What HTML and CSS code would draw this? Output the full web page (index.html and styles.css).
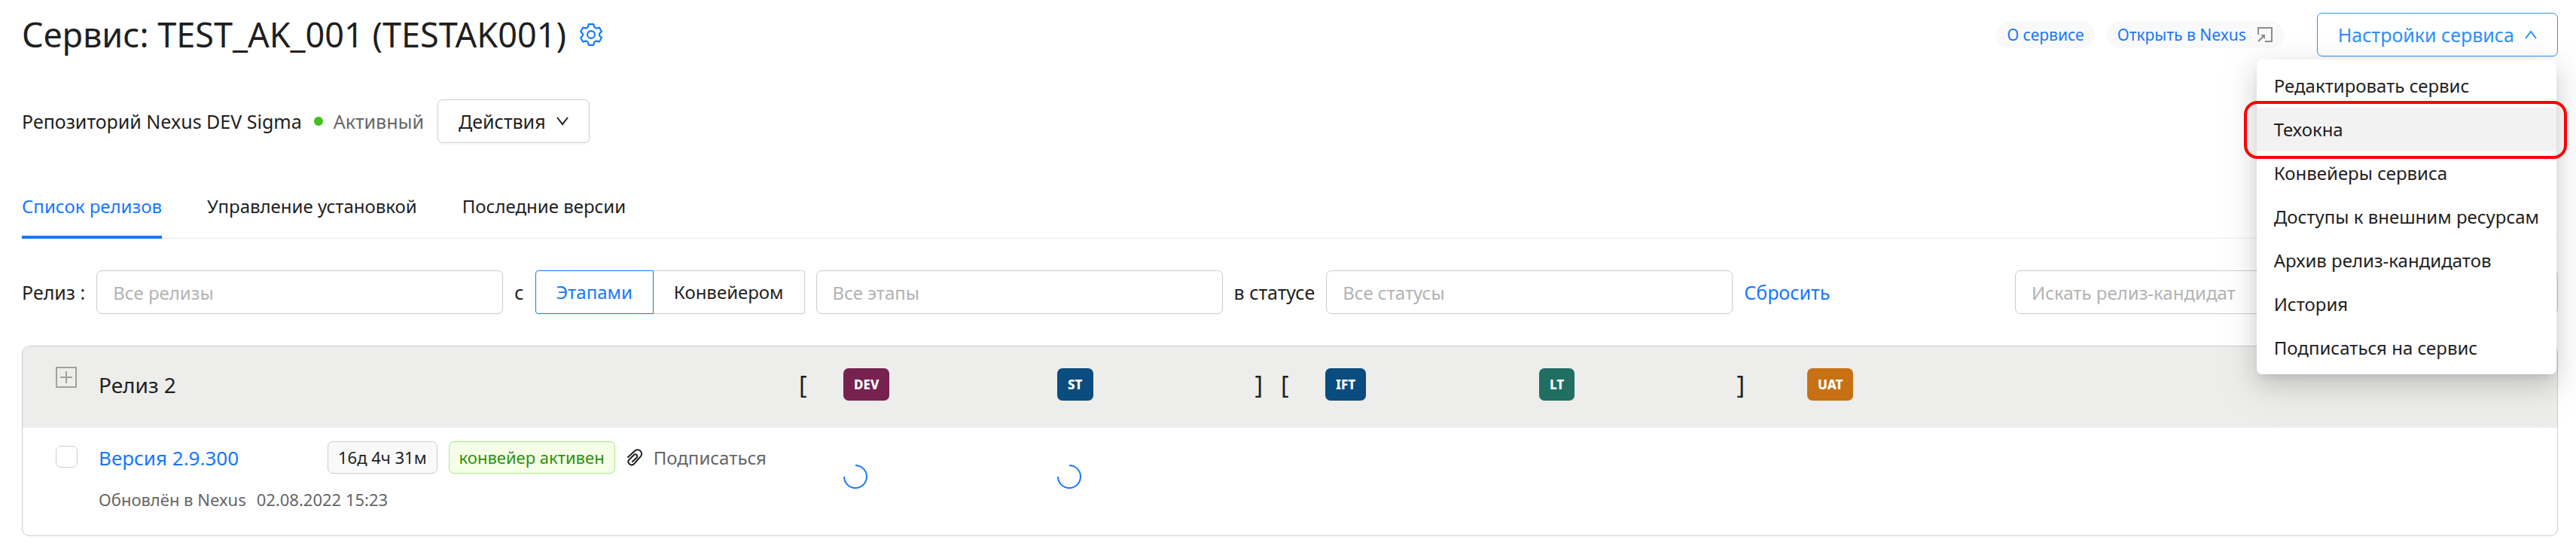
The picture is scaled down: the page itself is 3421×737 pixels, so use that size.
FILE: index.html
```html
<!DOCTYPE html>
<html lang="ru">
<head>
  <meta charset="UTF-8" />
  <meta name="viewport" content="width=device-width, initial-scale=1.0" />
  <title>Сервис: TEST_AK_001 (TESTAK001)</title>
  <link rel="stylesheet" href="styles.css">
</head>
<body>
  <header class="page-header">
    <h1>Сервис: TEST_AK_001 (TESTAK001)</h1>
    <button class="icon-button" aria-label="Настроить">
      <svg class="gear" viewBox="0 0 28 28" fill="none" stroke="currentColor" stroke-width="2" stroke-linejoin="round">
        <path d="M11 1h6l.9 3.700q1.400.500 2.600 1.500l3.600-1 2.900 5-2.700 2.600v2.400l2.700 2.600-2.900 5-3.600-1q-1.200 1-2.600 1.500l-.9 3.700h-6l-.9-3.700q-1.400-.500-2.600-1.500l-3.600 1-2.900-5 2.700-2.600v-2.400l-2.700-2.600 2.900-5 3.600 1q1.200-1 2.600-1.500z" />
        <circle cx="14" cy="14" r="4.600" />
      </svg>
    </button>
    <div class="header-actions">
      <a href="#about" class="pill">О сервисе</a>
      <a href="#nexus" class="pill">Открыть в Nexus
        <svg class="open-icon" viewBox="0 0 22 22" fill="none" stroke="#8c8c8c" stroke-width="2">
          <path d="M2 11V2h18v18h-9M2 20l7-7" />
          <path d="M11 11v6l-6-6z" fill="#8c8c8c" stroke="none" />
        </svg>
      </a>
      <div class="dropdown">
        <button class="btn btn-active">Настройки сервиса
          <svg class="chevron" viewBox="0 0 16 16" fill="none" stroke="currentColor" stroke-width="2"><path d="M1 13L8 4l7 9" /></svg>
        </button>
        <ul class="menu">
          <li><a href="#edit">Редактировать сервис</a></li>
          <li class="marked"><a href="#windows">Техокна</a></li>
          <li><a href="#pipelines">Конвейеры сервиса</a></li>
          <li><a href="#access">Доступы к внешним ресурсам</a></li>
          <li><a href="#archive">Архив релиз-кандидатов</a></li>
          <li><a href="#history">История</a></li>
          <li><a href="#subscribe">Подписаться на сервис</a></li>
        </ul>
      </div>
    </div>
  </header>

  <div class="repo">
    <span>Репозиторий Nexus DEV Sigma</span>
    <span class="status">Активный</span>
    <button class="btn">Действия
      <svg class="chevron" viewBox="0 0 16 16" fill="none" stroke="currentColor" stroke-width="2"><path d="M1 3l7 9 7-9" /></svg>
    </button>
  </div>

  <nav class="tabs">
    <a href="#releases" class="active">Список релизов</a>
    <a href="#install">Управление установкой</a>
    <a href="#latest">Последние версии</a>
  </nav>

  <form class="filters">
    <label for="release">Релиз :</label>
    <input type="text" id="release" placeholder="Все релизы">
    <span>с</span>
    <div class="toggle">
      <button type="button" class="selected">Этапами</button>
      <button type="button">Конвейером</button>
    </div>
    <input type="text" aria-label="Этапы" placeholder="Все этапы">
    <label for="state">в статусе</label>
    <input type="text" id="state" placeholder="Все статусы">
    <button type="reset" class="link">Сбросить</button>
    <input type="search" class="search" aria-label="Поиск" placeholder="Искать релиз-кандидат">
  </form>

  <table class="releases">
    <colgroup>
      <col class="col-check"><col class="col-name"><col class="col-bracket">
      <col class="col-stage"><col class="col-last"><col class="col-bracket">
      <col class="col-stage"><col class="col-last"><col class="col-bracket">
      <col>
    </colgroup>
    <thead>
      <tr>
        <th>
          <button class="expand" aria-label="Развернуть">
            <svg viewBox="0 0 28 28" fill="none" stroke="#a0a0a0" stroke-width="2"><path d="M1 1h26v26H1zM6 14h16M14 6v16" /></svg>
          </button>
        </th>
        <th>Релиз 2</th>
        <th class="bracket">[</th>
        <th><span class="stage dev">DEV</span></th>
        <th><div class="cell"><span class="stage st">ST</span><span class="bracket">]</span></div></th>
        <th class="bracket">[</th>
        <th><span class="stage st">IFT</span></th>
        <th><div class="cell"><span class="stage lt">LT</span><span class="bracket">]</span></div></th>
        <th></th>
        <th><span class="stage uat">UAT</span></th>
      </tr>
    </thead>
    <tbody>
      <tr>
        <td><input type="checkbox" aria-label="Версия 2.9.300"></td>
        <td>
          <div class="version">
            <a href="#version">Версия 2.9.300</a>
            <span class="tag">16д 4ч 31м</span>
            <span class="tag green">конвейер активен</span>
            <svg class="clip" viewBox="0 0 22 24" fill="none" stroke="#1f1f1f" stroke-width="2" stroke-linecap="round">
              <path d="M2 11L10.500 3.200a5.200 5.200 0 0 1 8.300 7L10 20a4.400 4.400 0 0 1-7-5.200L9.800 8.200a2.600 2.600 0 0 1 3.800 3.600L7.800 17" />
            </svg>
            <button class="subscribe">Подписаться</button>
          </div>
          <div class="updated"><span>Обновлён в Nexus</span><time>02.08.2022 15:23</time></div>
        </td>
        <td></td>
        <td><svg class="spinner" viewBox="0 0 32 32"><path d="M16 1a15 15 0 1 1-15 15" /></svg></td>
        <td><svg class="spinner" viewBox="0 0 32 32"><path d="M16 1a15 15 0 1 1-15 15" /></svg></td>
        <td></td>
        <td></td>
        <td></td>
        <td></td>
        <td></td>
      </tr>
    </tbody>
  </table>
</body>
</html>
```
FILE: styles.css
```css
* {
  box-sizing: border-box;
}

body {
  margin: 0;
  padding: 16px 24px 24px 29px;
  background: #fff;
  color: #1f1f1f;
  font-family: 'Noto Sans', sans-serif;
  font-size: 25px;
  line-height: 36px;
}

a {
  color: #1677ff;
  text-decoration: none;
}

button,
input {
  font: inherit;
  color: inherit;
}

button {
  padding: 0;
  border: 0;
  background: none;
  cursor: pointer;
}

svg {
  display: block;
  flex: none;
}

.page-header {
  display: flex;
  align-items: center;
  height: 60px;
}

h1 {
  margin: 0;
  font-size: 45px;
  font-weight: 400;
  line-height: 60px;
}

.icon-button {
  margin-left: 18px;
  color: #1677ff;
}

.gear {
  width: 30px;
  height: 30px;
}

.header-actions {
  display: flex;
  align-items: center;
  gap: 16px;
  margin-left: auto;
}

.pill {
  display: flex;
  align-items: center;
  gap: 14px;
  padding: 0 14px;
  border-radius: 18px;
  background: #f9f9f9;
  font-size: 21px;
}

.open-icon {
  width: 22px;
  height: 22px;
}

.dropdown {
  position: relative;
  margin-left: 28px;
}

.btn {
  display: flex;
  align-items: center;
  gap: 14px;
  height: 58px;
  padding: 0 27px;
  border: 1px solid #ccc;
  border-radius: 7px;
  background: #fff;
  box-shadow: 0 3px 0 #f9f9f9;
}

.btn-active {
  border-color: #2e90fa;
  color: #2e90fa;
}

.chevron {
  width: 16px;
  height: 16px;
}

.menu {
  position: absolute;
  z-index: 2;
  top: 62px;
  right: 2px;
  margin: 0;
  padding: 6px 0;
  border-radius: 7px;
  background: #fff;
  box-shadow: 0 12px 32px rgba(0, 0, 0, 0.16), 0 6px 12px -6px rgba(0, 0, 0, 0.12), 0 18px 60px 16px rgba(0, 0, 0, 0.04);
  font-size: 24px;
  line-height: 35px;
  list-style: none;
  white-space: nowrap;
}

.menu a {
  display: block;
  padding: 11px 23px 12px;
  color: #1f1f1f;
}

.marked {
  position: relative;
}

.marked a {
  background: #f2f2f2;
}

/* red highlight around the item */
.marked::after {
  content: '';
  position: absolute;
  inset: -9px -14px -10px -17px;
  border: 4px solid #f00;
  border-radius: 18px;
  pointer-events: none;
}

.repo {
  display: flex;
  align-items: center;
  margin-top: 56px;
}

.status {
  display: flex;
  align-items: center;
  gap: 14px;
  margin: 0 18px 0 16px;
  color: #666;
}

.status::before {
  content: '';
  width: 12px;
  height: 12px;
  border-radius: 50%;
  background: #43c11c;
}

.tabs {
  display: flex;
  gap: 60px;
  margin-top: 46px;
  border-bottom: 1px solid #ececec;
  font-size: 24px;
}

.tabs a {
  padding: 20px 0 21px;
  margin-bottom: -1px;
  border-bottom: 4px solid transparent;
  color: #1f1f1f;
}

.tabs .active {
  border-color: #1677ff;
  color: #1677ff;
}

.filters {
  display: flex;
  align-items: center;
  gap: 15px;
  margin-top: 42px;
}

.filters input {
  width: 540px;
  height: 58px;
  padding: 0 21px;
  border: 1px solid #ccc;
  border-radius: 7px;
  background: #fff;
  font-size: 24px;
}

.filters input::placeholder {
  color: #b3b3b3;
  opacity: 1;
}

.filters .search {
  width: 721px;
  margin-left: auto;
}

.toggle {
  display: flex;
}

.toggle button {
  height: 58px;
  padding: 0 27px;
  border: 1px solid #ccc;
  border-left: 0;
  border-radius: 0 4px 4px 0;
  font-size: 24px;
}

.toggle .selected {
  border: 1px solid #1677ff;
  border-radius: 4px 0 0 4px;
  color: #1677ff;
}

.link {
  color: #1677ff;
}

.releases {
  width: 100%;
  margin-top: 42px;
  border: 1px solid #ccc;
  border-radius: 10px;
  border-spacing: 0;
  table-layout: fixed;
  overflow: hidden;
}

.releases th,
.releases td {
  padding: 0;
  text-align: left;
}

.releases th {
  height: 108px;
  padding-bottom: 7px;
  background: #ededeb;
  font-size: 28px;
  font-weight: 400;
}

.releases td {
  height: 143px;
  padding-top: 18px;
  vertical-align: top;
}

.col-check {
  width: 101px;
}

.col-name {
  width: 930px;
}

.col-bracket {
  width: 59px;
}

.col-stage {
  width: 284px;
}

.col-last {
  width: 297px;
}

.releases th:first-child,
.releases td:first-child {
  padding-left: 44px;
}

.releases .bracket {
  font-size: 32px;
}

.cell {
  display: flex;
  align-items: center;
  justify-content: space-between;
  padding-right: 24px;
}

.expand {
  display: block;
  width: 28px;
  height: 28px;
  margin-bottom: 20px;
}

.stage {
  display: inline-block;
  padding: 0 14px;
  border-radius: 7px;
  color: #fff;
  font-size: 17px;
  font-weight: 800;
  line-height: 43px;
  vertical-align: middle;
}

.dev {
  background: #77214f;
}

.st {
  background: #0a4c7e;
}

.lt {
  background: #216e62;
}

.uat {
  background: #c77014;
}

input[type='checkbox'] {
  appearance: none;
  display: block;
  width: 29px;
  height: 29px;
  margin: 6px 0 0;
  border: 1px solid #ccc;
  border-radius: 7px;
}

.version {
  display: flex;
  align-items: center;
}

.version > a {
  width: 304px;
  font-size: 26px;
}

.tag {
  margin-right: 15px;
  padding: 0 13px;
  border: 1px solid #ccc;
  border-radius: 7px;
  background: #f9f9f9;
  font-size: 22px;
  line-height: 41px;
}

.green {
  border-color: #a5ea7e;
  background: #f5ffe8;
  color: #2b920c;
}

.clip {
  width: 22px;
  height: 24px;
}

.subscribe {
  margin-left: 14px;
  color: #666;
  font-size: 24px;
}

.updated {
  display: flex;
  gap: 14px;
  margin-top: 16px;
  color: #666;
  font-size: 22px;
}

.spinner {
  width: 32px;
  height: 32px;
  margin-top: 31px;
  fill: none;
  stroke: #1677ff;
  stroke-width: 2;
}
```
